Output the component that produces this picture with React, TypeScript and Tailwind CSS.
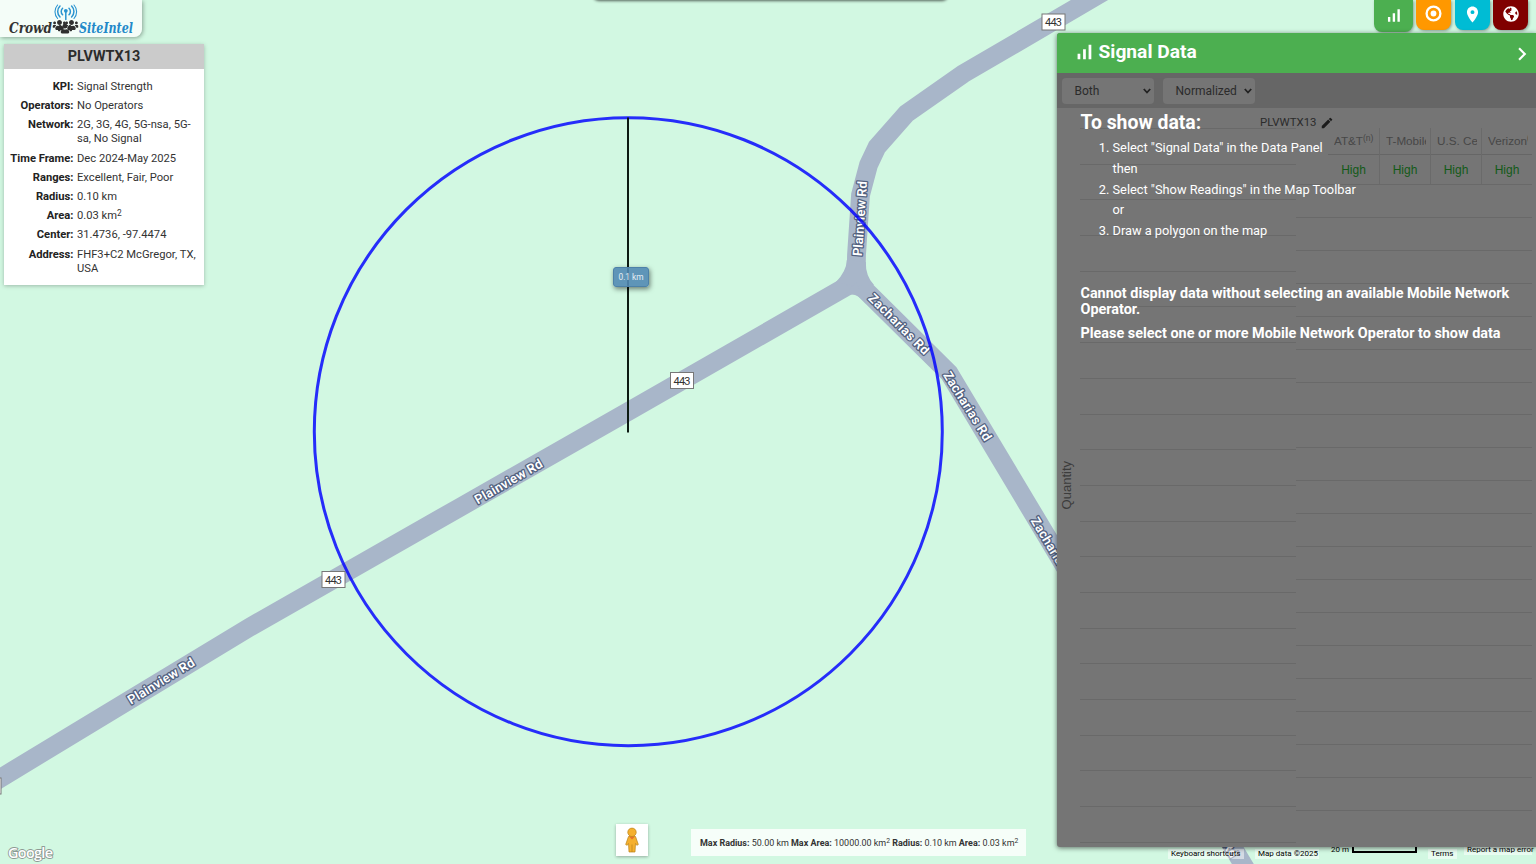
import type { ReactNode } from 'react';
import { MdSignalCellularAlt, MdLocationOn, MdEdit, MdChevronRight } from 'react-icons/md';
import { FaGlobeAmericas, FaUsers } from 'react-icons/fa';

function RoadLabel({ x, y, angle, length, text }: { x: number; y: number; angle: number; length: number; text: string }) {
  return (
    <text
      x={x}
      y={y}
      transform={`rotate(${angle} ${x} ${y})`}
      textLength={length}
      textAnchor="middle"
      dominantBaseline="central"
      className="fill-white stroke-[#52617f] text-[13px] font-semibold"
      strokeWidth="2.6"
      strokeLinejoin="round"
      paintOrder="stroke"
    >
      {text}
    </text>
  );
}

function RouteShield({ x, y, label }: { x: number; y: number; label?: string }) {
  return (
    <g>
      <rect x={x - 11.5} y={y - 8} width="23" height="16" fill="#fff" stroke="#777" strokeWidth="1" />
      {label && <text x={x} y={y + 4} textAnchor="middle" textLength="17" className="fill-[#333] text-[11px]">{label}</text>}
    </g>
  );
}

function MapCanvas() {
  return (
    <svg className="absolute inset-0" width="1536" height="864" viewBox="0 0 1536 864">
      <g fill="none" stroke="#a8b6c9" strokeWidth="18.8" strokeLinejoin="miter">
        <path d="M-20 790.5 L250 627 L460 507.3 L628 411.7 L856 281" />
        <path d="M856 285 L856.5 255 L860.5 195 L868.5 165 L877 147 L906.5 113.5 L963 74 L1110 -12" />
        <path d="M853 278 L949 373 L1250 876" />
      </g>
      <path d="M846.8 260 Q846.500 271 836 282 L856 286 L874 285 Q865.5 276 865.8 262 Z" fill="#a8b6c9" />
      <path d="M838 302.500 Q852 286 866 304 L856 282 Z" fill="#a8b6c9" />

      <RoadLabel x={161} y={681} angle={-31.5} length={76} text="Plainview Rd" />
      <RoadLabel x={508.5} y={481.5} angle={-30} length={76} text="Plainview Rd" />
      <RoadLabel x={860} y={218.5} angle={-86} length={75} text="Plainview Rd" />
      <RoadLabel x={899} y={324} angle={45} length={80} text="Zacharias Rd" />
      <RoadLabel x={967.5} y={406} angle={58} length={79} text="Zacharias Rd" />
      <RoadLabel x={1054.5} y={552} angle={59} length={79} text="Zacharias Rd" />
      <RoadLabel x={1214} y={822} angle={59} length={80} text="Zacharias Rd" />

      <RouteShield x={1053.5} y={22} label="443" />
      <RouteShield x={333.5} y={579.5} label="443" />
      <RouteShield x={682} y={380.5} label="443" />
      <RouteShield x={-10.5} y={786} />

      <circle cx="628.3" cy="431.7" r="314" fill="none" stroke="#0000ff" strokeOpacity=".82" strokeWidth="3" />
      <path d="M628 117.5 V432.5" stroke="#0c1a12" strokeWidth="2" />
    </svg>
  );
}

function Logo() {
  return (
    <div className="h-[37px] w-[142px] rounded-br-lg bg-white/75 shadow-[1px_1px_4px_rgba(0,0,0,0.35)]">
      <svg width="142" height="37" viewBox="0 0 142 37">
        <g fill="none" stroke="#2a94d0" strokeWidth="1.5" strokeLinecap="round">
          <path d="M62.6 14.8 a4.6 4.6 0 0 1 0 -6.6 M69 14.8 a4.6 4.6 0 0 0 0 -6.6" />
          <path d="M60 17 a7.7 7.7 0 0 1 0 -11 M71.600 17 a7.700 7.700 0 0 0 0 -11" />
          <path d="M57.600 18.500 a10 10 0 0 1 0 -13.500 M74 18.500 a10 10 0 0 0 0 -13.500" strokeWidth="1.1" />
          <path d="M65.800 12 V19.500" />
        </g>
        <circle cx="65.800" cy="10.800" r="1.900" fill="#2a94d0" />
        <text x="9" y="33" textLength="43" lengthAdjust="spacingAndGlyphs" className="fill-[#333] font-['DejaVu_Serif',serif] text-[14px] font-bold italic">Crowd</text>
        <text x="79" y="33" textLength="54" lengthAdjust="spacingAndGlyphs" className="fill-[#2389c9] font-['DejaVu_Serif',serif] text-[14px] font-bold italic">SiteIntel</text>
        <FaUsers x="52.500" y="18" size={14} color="#2f2f2f" />
        <FaUsers x="64.500" y="18" size={14} color="#2f2f2f" />
        <FaUsers x="58" y="21.500" size={14} color="#2f2f2f" />
      </svg>
    </div>
  );
}

const details: [string, ReactNode][] = [
  ['KPI:', 'Signal Strength'],
  ['Operators:', 'No Operators'],
  ['Network:', '2G, 3G, 4G, 5G-nsa, 5G-sa, No Signal'],
  ['Time Frame:', 'Dec 2024-May 2025'],
  ['Ranges:', 'Excellent, Fair, Poor'],
  ['Radius:', '0.10 km'],
  ['Area:', <>0.03 km<Sup /></>],
  ['Center:', '31.4736, -97.4474'],
  ['Address:', 'FHF3+C2 McGregor, TX, USA'],
];

function Sup() {
  return <sup className="relative -top-[0.4em] align-baseline text-[75%] leading-none">2</sup>;
}

function InfoCard() {
  return (
    <section className="ml-1 mt-[7px] w-[200px] bg-white pb-[9px] shadow-[0_1px_4px_rgba(0,0,0,0.25)]">
      <h1 className="flex h-[25px] items-center justify-center bg-[#cbcbcb] text-[14.400px] font-bold text-[#2c2c2c]">PLVWTX13</h1>
      <dl className="mt-[10.500px] flex flex-col gap-[4.8px] text-[11.200px] leading-[14.4px] text-[#333]">
        {details.map(([label, value]) => (
          <div key={label} className="flex gap-[3.500px]">
            <dt className="w-[69.500px] shrink-0 text-right font-bold text-[#222]">{label}</dt>
            <dd className="w-[122px]">{value}</dd>
          </div>
        ))}
      </dl>
    </section>
  );
}

function Tabs() {
  return (
    <nav className="mr-2 flex items-start text-white">
      <button className="mr-[3px] flex h-8 w-[39px] items-end justify-center rounded-b-lg bg-[#4caf50] pb-[7.500px] shadow-[1px_1px_3px_rgba(0,0,0,0.35)]"><MdSignalCellularAlt size={19} /></button>
      <button className="mr-1 flex h-[30px] w-[35px] items-end justify-center rounded-b-lg bg-[#ff9800] pb-[8px] shadow-[1px_1px_3px_rgba(0,0,0,0.35)]">
        <svg width="17" height="17" viewBox="0 0 17 17"><circle cx="8.500" cy="8.500" r="6.900" fill="none" stroke="#fff" strokeWidth="2.300" /><circle cx="8.500" cy="8.500" r="2.900" fill="#fff" /></svg>
      </button>
      <button className="mr-[3px] flex h-[30px] w-[35px] items-end justify-center rounded-b-lg bg-[#00bcd4] pb-[6.500px] shadow-[1px_1px_3px_rgba(0,0,0,0.35)]"><MdLocationOn size={19} /></button>
      <button className="flex h-[30px] w-[35px] items-end justify-center rounded-b-lg bg-[#800000] pb-[8px] shadow-[1px_1px_3px_rgba(0,0,0,0.35)]"><FaGlobeAmericas size={16} /></button>
    </nav>
  );
}

function PickList({ value }: { value: string }) {
  return (
    <div className="flex h-[26px] w-[92px] items-center justify-between rounded-sm bg-[#757575] pl-[13px] pr-[3px] text-[12px] text-[#2b2b2b]">
      {value}
      <svg width="8" height="6" viewBox="0 0 8 6" fill="none" stroke="#222" strokeWidth="1.8"><path d="M0.800 1 L4 4.500 L7.200 1" /></svg>
    </div>
  );
}

const operators: [string, string][] = [['AT&T', '(n)'], ['T-Mobile', ''], ['U.S. Ce', ''], ['Verizon', '(']];

function ComparisonTable() {
  return (
    <div className="ml-[32px] mt-5 flex h-14 w-[204px] font-['Liberation_Sans',sans-serif]">
      {operators.map(([name, note], i) => (
        <div key={name} className={`flex w-[51px] flex-col ${i > 0 ? 'border-l border-[#6a6a6a]' : ''}`}>
          <div className="flex h-[27px] items-center border-b border-[#666] pl-[6px] text-[11.700px] text-[#474747]">
            <span className="w-[40px] overflow-hidden whitespace-nowrap">{name}{note && <sup className="relative -top-1 align-baseline text-[8.500px]">{note}</sup>}</span>
          </div>
          <div className="flex h-[29px] items-center justify-center text-[12px] text-[#125a18]">High</div>
        </div>
      ))}
    </div>
  );
}

function Notice() {
  return (
    <div className="absolute left-6 top-0 w-[440px] text-white">
      <h3 className="mt-[3px] text-[19.400px] font-bold leading-6">To show data:</h3>
      <ol className="mt-[3px] list-decimal pl-8 text-[12.800px] leading-[20.8px]">
        <li>Select "Signal Data" in the Data Panel<br />then</li>
        <li>Select "Show Readings" in the Map Toolbar<br />or</li>
        <li>Draw a polygon on the map</li>
      </ol>
      <p className="mt-[44px] text-[14.4px] font-bold leading-4">Cannot display data without selecting an available Mobile Network Operator.</p>
      <p className="mt-2 text-[14.4px] font-bold leading-4">Please select one or more Mobile Network Operator to show data</p>
    </div>
  );
}

function DataPanel() {
  return (
    <aside className="mt-px flex h-[814px] w-[479.500px] flex-col overflow-hidden rounded-l-[3px] bg-[#757575] shadow-[0_1px_5px_rgba(0,0,0,0.55)]">
      <header className="flex h-10 shrink-0 items-center bg-[#4caf50] pb-[2px] pl-[16px] text-white">
        <MdSignalCellularAlt size={22} />
        <h2 className="ml-1 text-[19.200px] font-bold">Signal Data</h2>
        <MdChevronRight size={26} className="ml-auto mr-px mt-[4px]" />
      </header>
      <div className="flex h-[35px] shrink-0 items-center gap-[9px] bg-[#666] pl-[5px]">
        <PickList value="Both" />
        <PickList value="Normalized" />
      </div>
      <div className="relative flex min-h-0 grow">
        <div className="flex w-[23.500px] items-center justify-center">
          <span className="mr-[3px] mt-[16px] rotate-180 font-['Liberation_Sans',sans-serif] text-[13px] text-[#3c3c3c] [writing-mode:vertical-rl]">Quantity</span>
        </div>
        <div className="w-[216px]">
          <div className="h-[21px] border-b border-[#696969]" />
          {Array.from({ length: 20 }, (_, i) => <div key={i} className="h-[35.700px] border-b border-[#696969]" />)}
        </div>
        <div className="w-[236px]">
          <ComparisonTable />
          <div className="border-b border-[#696969]" />
          {Array.from({ length: 19 }, (_, i) => <div key={i} className="h-[32.930px] border-b border-[#696969]" />)}
        </div>
        <div className="absolute left-[203.500px] top-[7px] flex items-center gap-[3px] text-[11.400px] leading-[15px] text-[#2b2b2b]">
          PLVWTX13 <MdEdit size={14} color="#1c1c1c" />
        </div>
        <Notice />
      </div>
    </aside>
  );
}

function Pegman() {
  return (
    <button className="flex size-8 items-center justify-center bg-white shadow-[0_1px_3px_rgba(0,0,0,0.3)]">
      <svg width="14" height="26" viewBox="0 0 14 26" stroke="#b98319" strokeWidth=".7" fill="#f5b02e">
        <path d="M3.500 9.500 H10.500 L13.300 17.500 L11.800 18.300 L10.500 16.500 L10 25 H4 L3.500 16.500 L2.200 18.300 L.7 17.500 Z" />
        <path d="M7 17.500 V25" />
        <path d="M4 9.500 L7 12.500 L10 9.500 Z" fill="#e9702a" stroke="none" />
        <circle cx="7" cy="5.300" r="4.200" />
      </svg>
    </button>
  );
}

function StatsBar() {
  return (
    <div className="flex h-[27px] w-[335px] items-center bg-white/80 pl-[9px] text-[8.960px] text-[#333]">
      <p className="whitespace-nowrap leading-[14px]">
        <b>Max Radius:</b> 50.00 km <b>Max Area:</b> 10000.00 km<Sup /> <b>Radius:</b> 0.10 km <b>Area:</b> 0.03 km<Sup />
      </p>
    </div>
  );
}

function Attribution() {
  return (
    <div className="absolute left-[1168px] top-[845px] flex h-[19px] items-start whitespace-nowrap text-[8px] leading-[10px] text-black">
      <span className="mt-[4px] w-[76px] bg-white/50 px-[3px]">Keyboard shortcuts</span>
      <span className="ml-[11px] mt-[4px] w-[64px] bg-white/50 px-[3px]">Map data ©2025</span>
      <span className="ml-[12px] w-[21px]">20 m</span>
      <span className="mt-[2px] h-[6px] w-[65px] border-2 border-t-0 border-black" />
      <span className="ml-[11px] mt-[4px] w-[29px] bg-white/50 px-[3px]">Terms</span>
      <span className="ml-[7px] w-[68px] bg-white/50 pl-[3px]">Report a map error</span>
    </div>
  );
}

export default function App() {
  return (
    <main className="relative h-[864px] w-[1536px] overflow-hidden bg-[#d2f8e2] font-[Roboto,sans-serif]">
      <MapCanvas />
      <div className="absolute -top-4 left-[593px] h-4 w-[355px] rounded-b-md shadow-[0_1px_3px_rgba(0,0,0,0.6)]" />
      <div className="absolute left-[613px] top-[267px] flex h-[20px] w-[36px] items-center justify-center rounded-[3px] border border-[#4d81a8] bg-[#5289b4]/90 text-[8.300px] text-white/85 shadow-[1px_2px_5px_rgba(0,0,0,0.5)]">0.1 km</div>
      <Attribution />
      <div className="relative flex h-full justify-between">
        <div>
          <Logo />
          <InfoCard />
        </div>
        <div className="flex flex-col items-end">
          <Tabs />
          <DataPanel />
        </div>
      </div>
      <div className="absolute left-[616px] top-[824px] flex items-end gap-[43px]">
        <Pegman />
        <StatsBar />
      </div>
      <svg className="absolute left-[5px] top-[843px]" width="52" height="20">
        <text x="3" y="15" textLength="45" paintOrder="stroke" stroke="#8e9a94" strokeWidth="1.800" className="fill-white font-['Open_Sans',sans-serif] text-[14.500px] font-semibold">Google</text>
      </svg>
    </main>
  );
}
